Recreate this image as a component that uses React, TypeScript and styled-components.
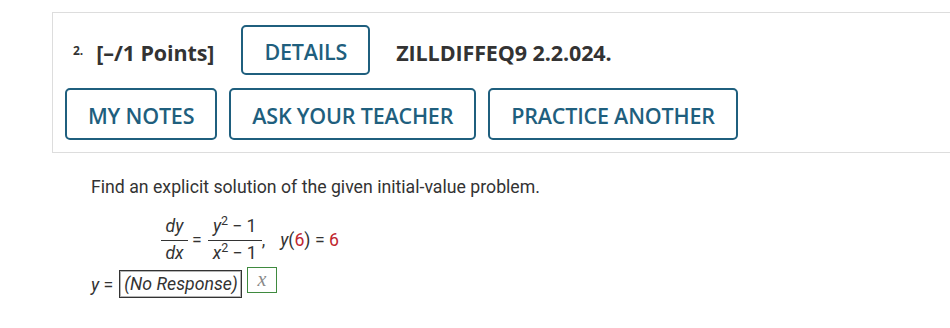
import React from 'react';
import styled, { createGlobalStyle } from 'styled-components';

const GlobalStyle = createGlobalStyle`
  html, body {
    margin: 0;
    padding: 0;
    background: #ffffff;
    overflow: hidden;
  }
`;

const Page = styled.div`
  padding-top: 12px;
  width: 950px;
  height: 328px;
`;

const Panel = styled.section`
  margin-left: 52px;
  margin-right: -20px;
  border: 1px solid #dddddd;
  padding: 12px 0 12px 12px;
  display: flex;
  flex-direction: column;
  gap: 13px;
`;

const HeaderRow = styled.div`
  display: flex;
  align-items: center;
  padding-left: 8px;
  height: 50px;
  font-family: 'Open Sans', 'Liberation Sans', sans-serif;
  color: #333333;
`;

const QNumber = styled.span`
  font-size: 12px;
  font-weight: 700;
  margin-right: 13px;
  margin-top: 1px;
`;

const HeaderText = styled.span<{ $gap?: number }>`
  font-size: 21.5px;
  font-weight: 700;
  margin-top: 4px;
  margin-right: ${(p) => p.$gap ?? 0}px;
  letter-spacing: -0.1px;
`;

const ButtonRow = styled.div`
  display: flex;
  gap: 12px;
`;

const ActionButton = styled.button<{ $tall?: boolean }>`
  height: ${(p) => (p.$tall ? 52 : 50)}px;
  padding: 2px 21px 0;
  border: 2px solid #1f5f7e;
  border-radius: 5px;
  background: #ffffff;
  color: #1f5f7e;
  font-family: 'Open Sans', 'Liberation Sans', sans-serif;
  font-size: 21.5px;
  font-weight: 600;
  letter-spacing: -0.2px;
  cursor: pointer;
`;

const Body = styled.div`
  margin-left: 91px;
  padding-top: 23px;
  font-family: Roboto, 'Liberation Sans', sans-serif;
  font-size: 17.7px;
  color: #333333;
`;

const Prompt = styled.p`
  margin: 0;
  line-height: 22px;
`;

const Equation = styled.div`
  display: flex;
  align-items: center;
  margin: 17px 0 0 70px;
  line-height: 22px;
`;

const Fraction = styled.span<{ $width: number }>`
  display: inline-flex;
  flex-direction: column;
  align-items: center;
  width: ${(p) => p.$width}px;
`;

const FracPart = styled.span`
  white-space: nowrap;
`;

const FracLine = styled.span`
  align-self: stretch;
  height: 1px;
  background: #333333;
  margin: 3px 0 1px;
`;

const Var = styled.i`
  font-style: italic;
`;

const Sup = styled.sup`
  font-size: 12.5px;
  vertical-align: 7px;
  line-height: 0;
  margin-right: 4px;
`;

const Op = styled.span<{ $left?: number; $right?: number }>`
  margin: 0 ${(p) => p.$right ?? 0}px 0 ${(p) => p.$left ?? 0}px;
`;

const Red = styled.span`
  color: #c0262e;
`;

const AnswerRow = styled.div`
  display: flex;
  align-items: flex-start;
  margin-top: 3px;
`;

const AnswerLabel = styled.span`
  margin: 7px 6px 0 0;
  line-height: 22px;
`;

const ResponseBox = styled.span`
  margin-top: 3px;
  height: 26px;
  padding: 0 3px 0 4px;
  border: 1px solid #333333;
  box-shadow: inset 0 0 0 1px #b5b5b5;
  font-style: italic;
  line-height: 26px;
`;

const MathButton = styled.span`
  margin-left: 5px;
  width: 28px;
  height: 24px;
  border: 1px solid #3f8a3f;
  display: flex;
  align-items: center;
  justify-content: center;
`;

const MathGlyph = styled.i`
  font-family: 'Liberation Serif', 'DejaVu Serif', serif;
  font-style: italic;
  font-size: 20px;
  line-height: 1;
  color: #8a8a8a;
  margin-top: -3px;
`;

const App: React.FC = () => {
  return (
    <Page>
      <GlobalStyle />
      <Panel>
        <HeaderRow>
          <QNumber>2.</QNumber>
          <HeaderText $gap={27}>[–/1 Points]</HeaderText>
          <ActionButton style={{ marginRight: 26 }}>DETAILS</ActionButton>
          <HeaderText>ZILLDIFFEQ9 2.2.024.</HeaderText>
        </HeaderRow>
        <ButtonRow>
          <ActionButton $tall>MY NOTES</ActionButton>
          <ActionButton $tall>ASK YOUR TEACHER</ActionButton>
          <ActionButton $tall>PRACTICE ANOTHER</ActionButton>
        </ButtonRow>
      </Panel>
      <Body>
        <Prompt>Find an explicit solution of the given initial-value problem.</Prompt>
        <Equation>
          <Fraction $width={27}>
            <FracPart>
              <Var>dy</Var>
            </FracPart>
            <FracLine />
            <FracPart>
              <Var>dx</Var>
            </FracPart>
          </Fraction>
          <Op $left={4} $right={6}>=</Op>
          <Fraction $width={54}>
            <FracPart>
              <Var>y</Var>
              <Sup>2</Sup>− 1
            </FracPart>
            <FracLine />
            <FracPart>
              <Var>x</Var>
              <Sup>2</Sup>− 1
            </FracPart>
          </Fraction>
          <Op $right={15}>,</Op>
          <span>
            <Var>y</Var>(<Red>6</Red>) = <Red>6</Red>
          </span>
        </Equation>
        <AnswerRow>
          <AnswerLabel>
            <Var>y</Var> =
          </AnswerLabel>
          <ResponseBox>(No Response)</ResponseBox>
          <MathButton>
            <MathGlyph>x</MathGlyph>
          </MathButton>
        </AnswerRow>
      </Body>
    </Page>
  );
};

export default App;
